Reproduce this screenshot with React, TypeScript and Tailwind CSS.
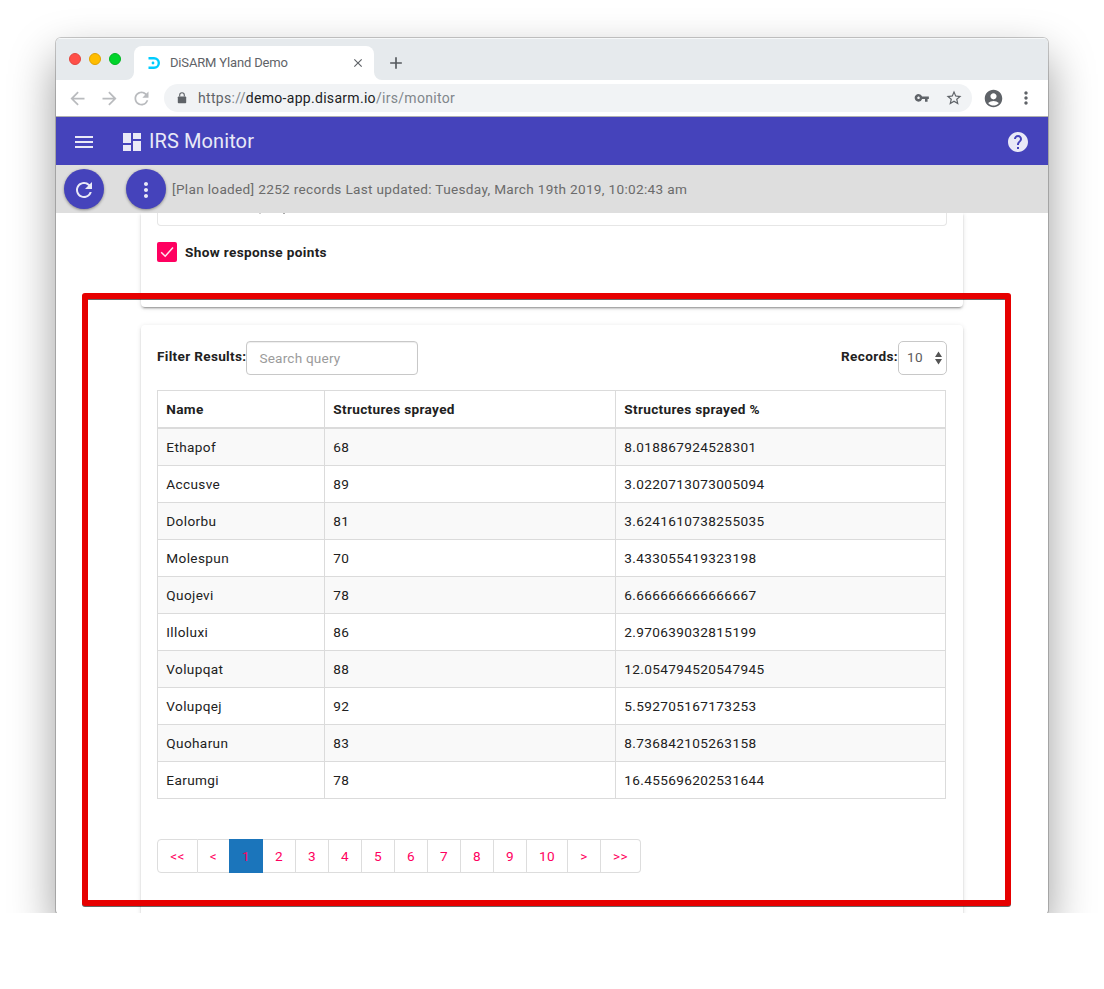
import {
  MdAccountCircle,
  MdAdd,
  MdArrowBack,
  MdArrowForward,
  MdClose,
  MdDashboard,
  MdHelp,
  MdMenu,
  MdMoreVert,
  MdRefresh,
  MdStarBorder,
  MdVpnKey,
} from "react-icons/md";

const rows: [string, string, string][] = [
  ["Ethapof", "68", "8.018867924528301"],
  ["Accusve", "89", "3.0220713073005094"],
  ["Dolorbu", "81", "3.6241610738255035"],
  ["Molespun", "70", "3.433055419323198"],
  ["Quojevi", "78", "6.666666666666667"],
  ["Illoluxi", "86", "2.970639032815199"],
  ["Volupqat", "88", "12.054794520547945"],
  ["Volupqej", "92", "5.592705167173253"],
  ["Quoharun", "83", "8.736842105263158"],
  ["Earumgi", "78", "16.455696202531644"],
];

const pages: [string, string][] = [
  ["<<", "w-[41px] rounded-l border-l border-r border-[#dddddd]"],
  ["<", "w-[31px] border-[#dddddd]"],
  ["1", "w-[34px] bg-[#1b75bb] border-[#1b75bb]"],
  ["2", "w-[33px] border-r border-[#dddddd]"],
  ["3", "w-[33px] border-r border-[#dddddd]"],
  ["4", "w-[33px] border-r border-[#dddddd]"],
  ["5", "w-[33px] border-r border-[#dddddd]"],
  ["6", "w-[33px] border-r border-[#dddddd]"],
  ["7", "w-[33px] border-r border-[#dddddd]"],
  ["8", "w-[33px] border-r border-[#dddddd]"],
  ["9", "w-[33px] border-r border-[#dddddd]"],
  ["10", "w-[41px] border-r border-[#dddddd]"],
  [">", "w-[33px] border-r border-[#dddddd]"],
  [">>", "w-[40px] rounded-r border-r border-[#dddddd]"],
];

const cardShadow =
  "shadow-[0_3px_1px_-2px_rgba(0,0,0,0.2),0_2px_2px_0_rgba(0,0,0,0.14),0_1px_5px_0_rgba(0,0,0,0.12)]";

function TabStrip() {
  return (
    <div className="flex h-[42px] items-end bg-[#e6eaed] shadow-[inset_0_1px_0_#f6f8f9]">
      <div className="flex h-full w-[70px] items-center gap-2 pl-[13px]">
        <span className="size-3 rounded-full border border-[#e2463f] bg-[#ff4f48]" />
        <span className="size-3 rounded-full border border-[#e0a200] bg-[#ffbd00]" />
        <span className="size-3 rounded-full border border-[#00b522] bg-[#00d42b]" />
      </div>
      <svg className="size-2 text-white" viewBox="0 0 8 8" fill="currentColor">
        <path d="M8 0v8H0a8 8 0 0 0 8-8z" />
      </svg>
      <div className="flex h-[34px] w-[240px] items-center rounded-t-lg bg-white pr-[9px] pl-[13px]">
        <svg className="mr-[9px] size-[14px]" viewBox="0 0 14 14" fill="none">
          <path d="M1.5 2.2H7a4.8 4.8 0 0 1 0 9.6H1.5" stroke="#00ccff" strokeWidth="2.4" />
          <circle cx="6" cy="7" r="1.4" fill="#00ccff" />
        </svg>
        <span className="flex-1 text-[13px] leading-[16px] tracking-[-0.16px] text-[#5f6368]">
          DiSARM Yland Demo
        </span>
        <MdClose className="size-[14px] text-[#5f6368]" />
      </div>
      <svg className="size-2 text-white" viewBox="0 0 8 8" fill="currentColor">
        <path d="M0 0v8h8a8 8 0 0 1-8-8z" />
      </svg>
      <div className="flex h-[34px] items-center pl-1">
        <MdAdd className="size-5 text-[#55595e]" />
      </div>
    </div>
  );
}

function AddressBar() {
  return (
    <div className="flex h-[37px] items-center border-b border-[#b0b0b0] bg-white pl-[11px]">
      <MdArrowBack className="size-[21px] text-[#b9bbbe]" />
      <MdArrowForward className="ml-[11px] size-[21px] text-[#b9bbbe]" />
      <MdRefresh className="ml-[11px] size-[21px] text-[#b9bbbe]" />
      <div className="ml-3 flex h-7 w-[808px] items-center rounded-full bg-[#f1f3f5] pr-[9px] pl-[13px]">
        <svg className="h-3 w-[10px]" viewBox="0 0 10 12" fill="none">
          <rect x="0.8" y="4.4" width="8.4" height="6.8" rx="0.8" fill="#5f6368" />
          <path d="M2.7 4.6V3a2.3 2.3 0 0 1 4.6 0v1.6" stroke="#5f6368" strokeWidth="1.1" />
        </svg>
        <span className="ml-[11px] flex-1 text-[14px] tracking-[0.3px] text-[#80868b]">
          <span className="text-[#5f6368]">https</span>://
          <span className="text-[#202124]">demo-app.disarm.io</span>/irs/monitor
        </span>
        <MdVpnKey className="mr-4 size-[15.5px] text-[#5f6368]" />
        <MdStarBorder className="size-[18px] text-[#5f6368]" />
      </div>
      <MdAccountCircle className="ml-[11px] size-[21px] text-[#5f6368]" />
      <MdMoreVert className="ml-3 size-[20px] text-[#5f6368]" />
    </div>
  );
}

function AppBar() {
  return (
    <header className="flex h-12 items-center bg-[#4543bb] pr-[18px] pl-4 text-[#e9e9f7]">
      <MdMenu className="mt-0.5 size-6" />
      <MdDashboard className="mt-0.5 ml-6 size-6" />
      <h1 className="ml-[5px] flex-1 text-[20px] leading-6 tracking-[0.1px]">IRS Monitor</h1>
      <MdHelp className="mt-0.5 size-6" />
    </header>
  );
}

function StatusBar() {
  const button =
    "flex size-10 items-center justify-center rounded-full bg-[#4543bb] text-[#e9e9f7] shadow-[0_1px_3px_rgba(0,0,0,0.4)]";
  return (
    <div className="flex h-12 items-center bg-[#dedede] pl-2">
      <button className={button}>
        <MdRefresh className="mt-0.5 size-6" />
      </button>
      <button className={`${button} ml-[22px]`}>
        <MdMoreVert className="mt-0.5 size-6" />
      </button>
      <span className="ml-1.5 tracking-[0.32px] text-[#6b6b6b]">
        [Plan loaded] 2252 records Last updated: Tuesday, March 19th 2019, 10:02:43 am
      </span>
    </div>
  );
}

function ResponsePointsCard() {
  return (
    <section className={`h-[94px] rounded-b bg-white px-4 ${cardShadow}`}>
      <div className="flex h-[13px] items-start gap-[22px] rounded-b border-x border-b border-[#e6e6e6] pl-[101px]">
        <span className="h-px w-0.5 bg-[#cfcfcf]" />
        <span className="h-px w-0.5 bg-[#a8a8a8]" />
      </div>
      <label className="mt-4 flex h-5 items-center gap-2 font-bold tracking-[0.35px]">
        <span className="flex size-5 items-center justify-center rounded-[2px] bg-[#ff0060]">
          <svg className="size-5" viewBox="0 0 20 20" fill="none" stroke="#ffe4ee" strokeWidth="1.5">
            <path d="M4.2 10.2l4 4L16 5.6" />
          </svg>
        </span>
        Show response points
      </label>
    </section>
  );
}

function ResultsTable() {
  return (
    <table className="mt-[15px] w-[789px] table-fixed border-separate border-spacing-0 border-t border-l border-[#dbdbdb] text-left">
      <colgroup>
        <col className="w-[167px]" />
        <col className="w-[291px]" />
        <col className="w-[330px]" />
      </colgroup>
      <thead>
        <tr className="h-[38px] font-bold">
          {["Name", "Structures sprayed", "Structures sprayed %"].map((title) => (
            <th key={title} className="border-r border-b-2 border-[#dbdbdb] py-0 pr-2 pl-[8.3px] tracking-[0.32px]">
              {title}
            </th>
          ))}
        </tr>
      </thead>
      <tbody>
        {rows.map((row) => (
          <tr key={row[0]} className="h-[37px] odd:bg-[#f9f9f9]">
            {row.map((value, i) => (
              <td key={i} className="border-r border-b border-[#dbdbdb] py-0 pr-2 pl-[8.3px] tracking-[0.37px]">
                {value}
              </td>
            ))}
          </tr>
        ))}
      </tbody>
    </table>
  );
}

function ResultsCard() {
  return (
    <section className={`mt-[18px] h-[620px] rounded bg-white px-4 pt-4 ${cardShadow}`}>
      <div className="flex h-[34px] items-center">
        <label className="mb-[4px] w-[89px] font-bold tracking-[0.32px] whitespace-nowrap">Filter Results:</label>
        <div className="flex h-full w-[172px] items-center rounded border border-[#c8c8c8] pl-[12.4px] tracking-[0.2px] text-[#9b9b9b] shadow-[inset_0_1px_1px_rgba(0,0,0,0.07)]">
          Search query
        </div>
        <label className="mb-[4px] ml-auto font-bold tracking-[0.35px]">Records:</label>
        <div className="flex h-full w-[49px] items-center justify-between rounded-[5px] border border-[#c8c8c8] pr-1 pl-2 text-[#5c5c5c]">
          <span className="mb-0.5 tracking-[0.3px]">10</span>
          <svg className="h-[14px] w-[7px]" viewBox="0 0 7 14" fill="#555">
            <path d="M3.5 0.5L7 6H0zM3.5 13.5L0 8h7z" />
          </svg>
        </div>
      </div>
      <ResultsTable />
      <nav className="mt-10 flex h-[34px]">
        {pages.map(([label, style]) => (
          <a
            key={label}
            className={`flex h-full items-center justify-center border-y tracking-[0.35px] text-[#ff0060] ${style}`}
          >
            {label}
          </a>
        ))}
      </nav>
    </section>
  );
}

export default function App() {
  return (
    <div className="h-[989px] bg-white font-['Roboto',sans-serif] text-[13.6px] leading-5 text-[#212121]">
      <div className="relative h-[913px] w-[1104px] overflow-hidden px-14 pt-[38px]">
        <main className="h-[877px] overflow-hidden rounded-[5px] bg-white shadow-[0_0_0_1px_rgba(0,0,0,0.2),0_20px_46px_rgba(0,0,0,0.4)]">
          <TabStrip />
          <AddressBar />
          <AppBar />
          <StatusBar />
          <div className="h-[702px] overflow-hidden px-[85px]">
            <ResponsePointsCard />
            <ResultsCard />
          </div>
        </main>
        <div className="absolute top-[293px] left-[82px] h-[613px] w-[929px] rounded-[3px] border-6 border-[#e60000] drop-shadow-[0_1px_0.4px_rgba(0,0,0,0.6)]" />
      </div>
    </div>
  );
}
